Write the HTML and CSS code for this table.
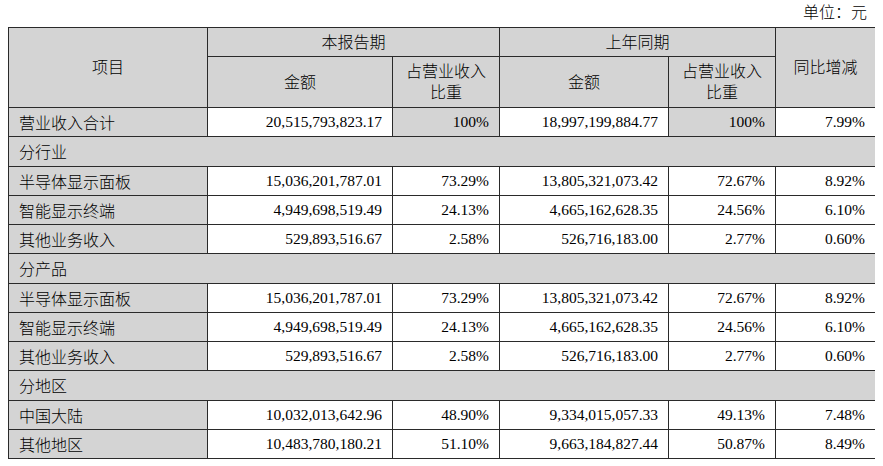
FILE: index.html
```html
<!DOCTYPE html>
<html lang="zh">
<head>
<meta charset="utf-8">
<link rel="stylesheet" href="styles.css">
</head>
<body>
<div class="unit">单位：元</div>
<table class="rev">
  <colgroup>
    <col class="c1"><col class="c2"><col class="c3"><col class="c4"><col class="c5"><col class="c6">
  </colgroup>
  <thead>
    <tr class="h1">
      <th rowspan="2" class="hd">项目</th>
      <th colspan="2" class="hd">本报告期</th>
      <th colspan="2" class="hd">上年同期</th>
      <th rowspan="2" class="hd">同比增减</th>
    </tr>
    <tr class="h2">
      <th class="hd">金额</th>
      <th class="hd">占营业收入<br>比重</th>
      <th class="hd">金额</th>
      <th class="hd">占营业收入<br>比重</th>
    </tr>
  </thead>
  <tbody>
    <tr><td class="lbl">营业收入合计</td><td class="num">20,515,793,823.17</td><td class="num g">100%</td><td class="num">18,997,199,884.77</td><td class="num g">100%</td><td class="num">7.99%</td></tr>
    <tr><td class="sec" colspan="6">分行业</td></tr>
    <tr><td class="lbl">半导体显示面板</td><td class="num">15,036,201,787.01</td><td class="num">73.29%</td><td class="num">13,805,321,073.42</td><td class="num">72.67%</td><td class="num">8.92%</td></tr>
    <tr><td class="lbl">智能显示终端</td><td class="num">4,949,698,519.49</td><td class="num">24.13%</td><td class="num">4,665,162,628.35</td><td class="num">24.56%</td><td class="num">6.10%</td></tr>
    <tr><td class="lbl">其他业务收入</td><td class="num">529,893,516.67</td><td class="num">2.58%</td><td class="num">526,716,183.00</td><td class="num">2.77%</td><td class="num">0.60%</td></tr>
    <tr><td class="sec" colspan="6">分产品</td></tr>
    <tr><td class="lbl">半导体显示面板</td><td class="num">15,036,201,787.01</td><td class="num">73.29%</td><td class="num">13,805,321,073.42</td><td class="num">72.67%</td><td class="num">8.92%</td></tr>
    <tr><td class="lbl">智能显示终端</td><td class="num">4,949,698,519.49</td><td class="num">24.13%</td><td class="num">4,665,162,628.35</td><td class="num">24.56%</td><td class="num">6.10%</td></tr>
    <tr><td class="lbl">其他业务收入</td><td class="num">529,893,516.67</td><td class="num">2.58%</td><td class="num">526,716,183.00</td><td class="num">2.77%</td><td class="num">0.60%</td></tr>
    <tr><td class="sec" colspan="6">分地区</td></tr>
    <tr><td class="lbl">中国大陆</td><td class="num">10,032,013,642.96</td><td class="num">48.90%</td><td class="num">9,334,015,057.33</td><td class="num">49.13%</td><td class="num">7.48%</td></tr>
    <tr><td class="lbl">其他地区</td><td class="num">10,483,780,180.21</td><td class="num">51.10%</td><td class="num">9,663,184,827.44</td><td class="num">50.87%</td><td class="num">8.49%</td></tr>
  </tbody>
</table>
</body>
</html>
```

FILE: styles.css
```css
html, body {
  margin: 0;
  padding: 0;
  background: #ffffff;
}
body {
  margin: 0 8px;
  font-family: "Liberation Serif", "Noto Sans CJK SC", serif;
  color: #000;
}
.unit {
  height: 27px;
  line-height: 26px;
  text-align: right;
  padding-right: 8px;
  font-size: 16px;
  font-weight: 300;
}
.rev {
  width: 867px;
  border-collapse: collapse;
  table-layout: fixed;
  border: 1px solid #333;
}
.c1 { width: 199px; }
.c2 { width: 185px; }
.c3 { width: 107px; }
.c4 { width: 169px; }
.c5 { width: 107px; }
.c6 { width: 100px; }
.rev th, .rev td {
  border: 1px solid #2a2a2a;
  padding: 0 10px;
  font-size: 16px;
  font-weight: 300;
  white-space: nowrap;
  overflow: hidden;
}
.hd {
  background: #d4d4d4;
  text-align: center;
  vertical-align: middle;
  line-height: 21px;
}
.h1 { height: 29px; }
.h2 { height: 51px; }
.rev tbody tr { height: 29.25px; }
.lbl {
  background: #d4d4d4;
  text-align: left;
}
.sec {
  background: #d4d4d4;
  text-align: left;
}
.num {
  text-align: right;
  font-size: 15.5px !important;
  background: #fff;
}
.num.g {
  background: #d4d4d4;
}
```
